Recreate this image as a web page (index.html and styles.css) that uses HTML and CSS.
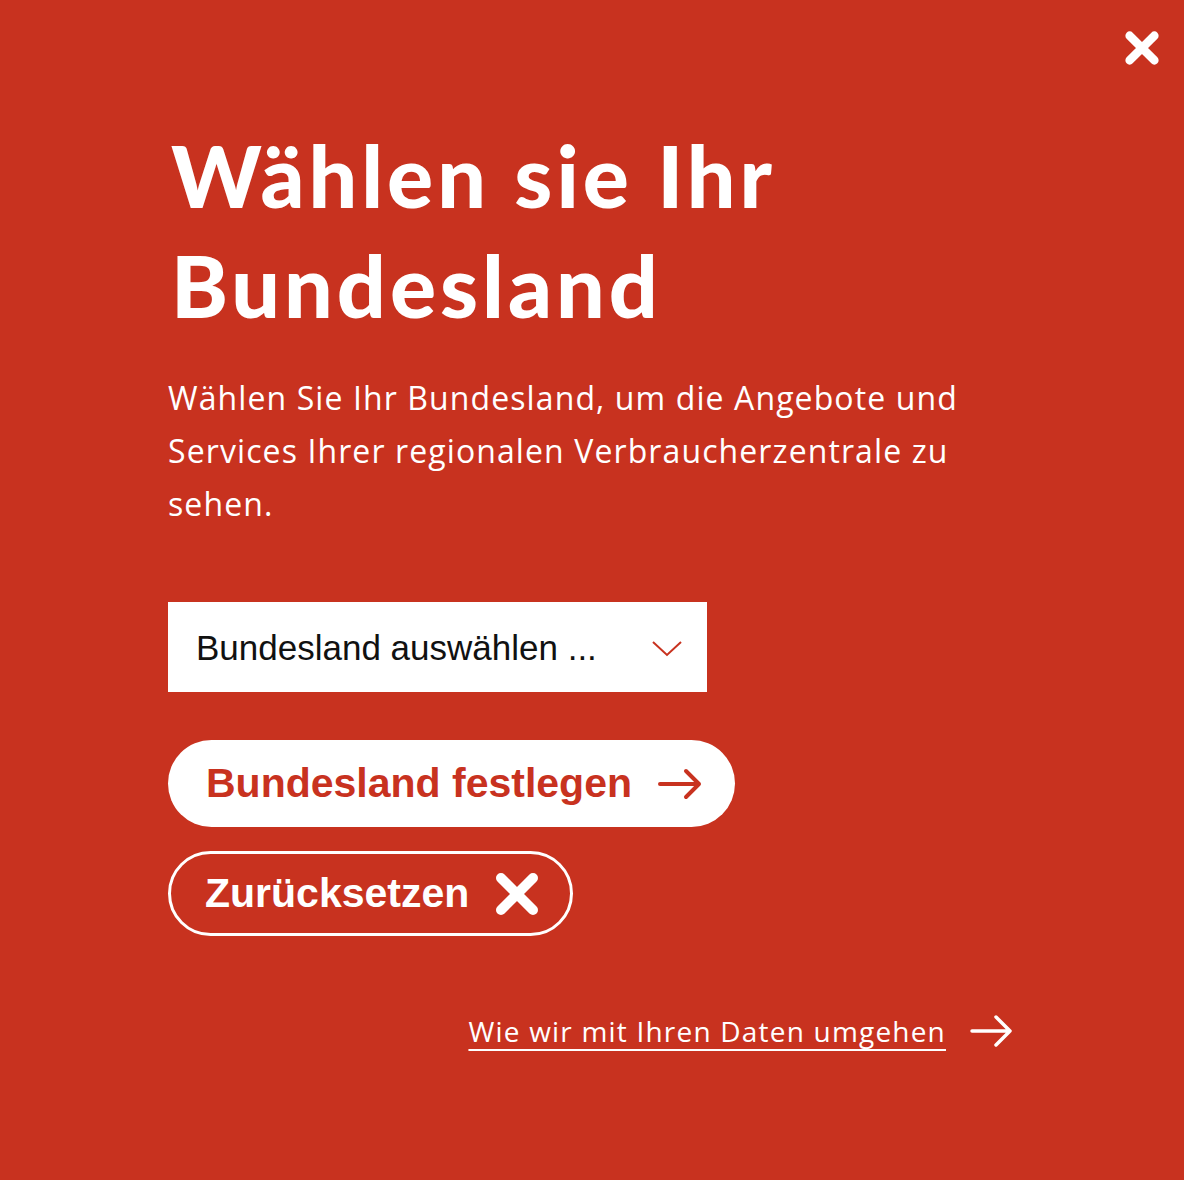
FILE: index.html
```html
<!DOCTYPE html>
<html lang="de">
    <head>
        <meta charset="utf-8">
        <title>Bundesland wählen</title>
        <link rel="stylesheet" href="styles.css">
    </head>
    <body>
        <div class='modal'>
            <button class='close' aria-label='Schließen'>
                <svg viewBox='0 0 40 40' width='40' height='38'>
                    <path d='M7 7 L33 33 M33 7 L7 33' />
                </svg>
            </button>
            <div class='content'>
                <h1>Wählen sie Ihr Bundesland</h1>
                <p class='lead'>Wählen Sie Ihr Bundesland, um die Angebote und
                Services Ihrer regionalen Verbraucherzentrale zu sehen.</p>

                <div class='select'>
                    <select>
                        <option>Bundesland auswählen ...</option>
                        <option>Baden-Württemberg</option>
                        <option>Bayern</option>
                        <option>Berlin</option>
                        <option>Brandenburg</option>
                        <option>Bremen</option>
                        <option>Hamburg</option>
                        <option>Hessen</option>
                        <option>Mecklenburg-Vorpommern</option>
                        <option>Niedersachsen</option>
                        <option>Nordrhein-Westfalen</option>
                        <option>Rheinland-Pfalz</option>
                        <option>Saarland</option>
                        <option>Sachsen</option>
                        <option>Sachsen-Anhalt</option>
                        <option>Schleswig-Holstein</option>
                        <option>Thüringen</option>
                    </select>
                    <svg class='chevron' viewBox='0 0 32 18' width='32' height='18'>
                        <path d='M2 2 L16 15 L30 2' />
                    </svg>
                </div>

                <div class='actions'>
                    <button class='btn btn-solid'>
                        Bundesland festlegen
                        <svg viewBox='0 0 44 32' width='44' height='32'>
                            <path d='M2 16 H41 M28 3 L41 16 L28 29' />
                        </svg>
                    </button>
                    <button class='btn btn-outline'>
                        Zurücksetzen
                        <svg viewBox='0 0 44 42' width='44' height='42'>
                            <path d='M6 5 L38 37 M38 5 L6 37' />
                        </svg>
                    </button>
                </div>

                <div class='privacy'>
                    <a href='#'>Wie wir mit Ihren Daten umgehen</a>
                    <svg viewBox='0 0 44 34' width='44' height='34'>
                        <path d='M2 17 H40 M26 3 L40 17 L26 31' />
                    </svg>
                </div>
            </div>
        </div>
    </body>
</html>
```

FILE: styles.css
```css
html, body {
    margin:0;
    height:100%;
}
body {
    background:#c8321f;
    color:#fff;
    font-family:'Open Sans', 'Lato', sans-serif;
}
.modal {
    position:relative;
    min-height:100%;
}
.close {
    position:absolute;
    top:29px;
    right:22px;
    padding:0;
    border:0;
    background:none;
    cursor:pointer;
}
.close svg path {
    stroke:#fff;
    stroke-width:9;
    stroke-linecap:round;
    fill:none;
}
.content {
    width:846px;
    padding:120px 0 0 168px;
}
h1 {
    margin:0 0 0 3px;
    font-family:'Lato', sans-serif;
    font-weight:900;
    font-size:86px;
    line-height:110px;
    letter-spacing:4px;
    width:700px;
}
.lead {
    margin:31px 0 0;
    font-size:32px;
    line-height:53px;
    letter-spacing:1.1px;
}
.select {
    position:relative;
    width:539px;
    margin-top:72px;
}
.select select {
    appearance:none;
    -webkit-appearance:none;
    display:block;
    width:100%;
    height:90px;
    padding:0 80px 0 28px;
    border:0;
    border-radius:0;
    background:#fff;
    color:#111;
    font:35px 'Liberation Sans', Arial, sans-serif;
}
.select .chevron {
    position:absolute;
    right:24px;
    top:38px;
    pointer-events:none;
}
.chevron path {
    stroke:#c8321f;
    stroke-width:2;
    fill:none;
}
.actions {
    display:flex;
    flex-direction:column;
    align-items:flex-start;
    gap:24px;
    margin-top:48px;
}
.btn {
    display:flex;
    align-items:center;
    gap:26px;
    height:87px;
    padding:0 33px 0 38px;
    border-radius:44px;
    font:bold 41px 'Liberation Sans', Arial, sans-serif;
    cursor:pointer;
}
.btn svg path {
    fill:none;
    stroke-linecap:round;
    stroke-linejoin:round;
}
.btn-solid {
    background:#fff;
    color:#c8321f;
    border:0;
}
.btn-solid svg path {
    stroke:#c8321f;
    stroke-width:4;
}
.btn-outline {
    height:85px;
    background:none;
    color:#fff;
    border:3px solid #fff;
    padding:0 31px 0 34px;
}
.btn-outline svg path {
    stroke:#fff;
    stroke-width:10;
}
.privacy {
    display:flex;
    justify-content:flex-end;
    align-items:center;
    gap:24px;
    margin-top:76px;
}
.privacy a {
    color:#fff;
    font-size:28px;
    letter-spacing:1.2px;
    text-decoration:underline;
    text-decoration-thickness:2px;
    text-underline-offset:7px;
}
.privacy svg path {
    stroke:#fff;
    stroke-width:3.5;
    fill:none;
    stroke-linecap:round;
    stroke-linejoin:round;
}
```
